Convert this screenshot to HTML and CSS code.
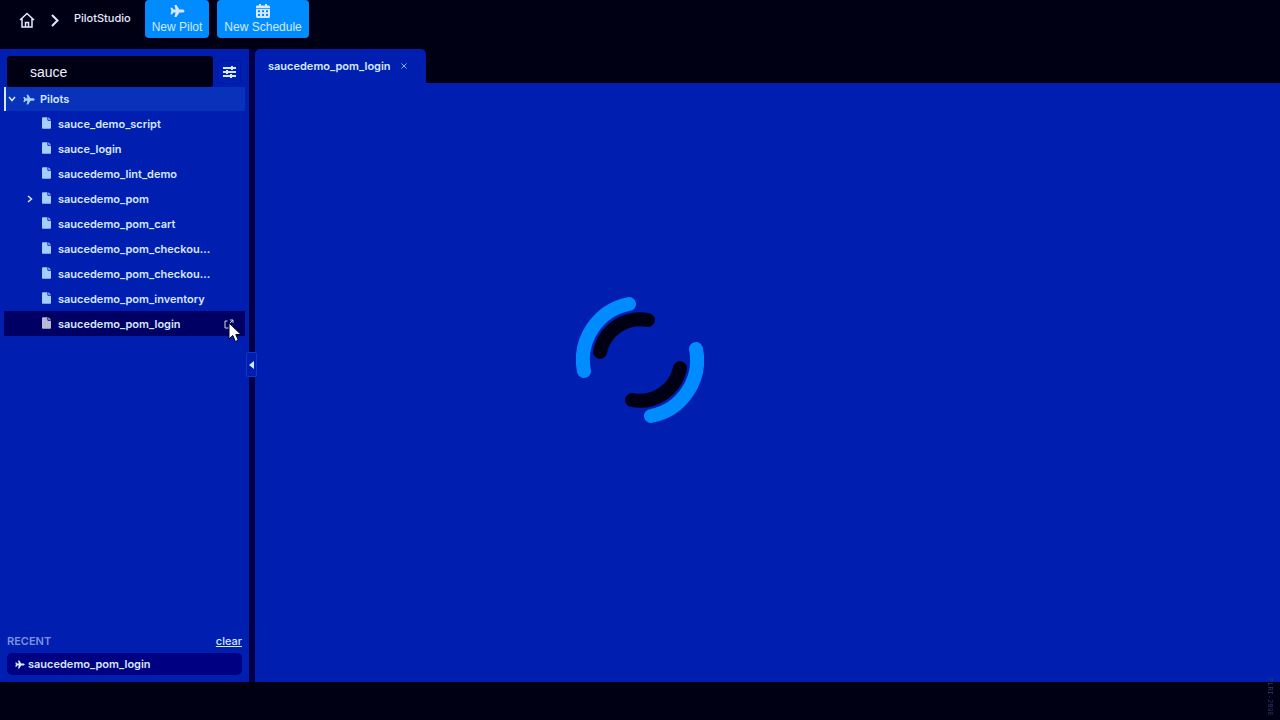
FILE: index.html
```html
<!DOCTYPE html>
<html lang="en">
<head>
  <meta charset="UTF-8" />
  <meta name="viewport" content="width=device-width, initial-scale=1.0" />
  <title>PilotStudio</title>
  <link rel="stylesheet" href="styles.css">
</head>
<body>
  <svg class="defs" aria-hidden="true">
    <symbol id="plane" viewBox="0 0 16 14">
      <path d="M15.5 7c0 1-1.300 1.700-2.500 1.700H10L6.900 13.500H4.700L6 8.700H3.700L2.400 10.400H.5L1.400 7 .5 3.600h1.900l1.300 1.700H6L4.700.5h2.200L10 5.300h3c1.200 0 2.500.7 2.500 1.700z" />
    </symbol>
    <symbol id="file" viewBox="0 0 10 13">
      <path d="M1.500 0H6v3.200c0 .5.300.8.800.8H10v7.700c0 .7-.5 1.300-1.300 1.300H1.300C.5 13 0 12.400 0 11.700V1.300C0 .5.600 0 1.500 0zM7 0l3 3H7z" />
    </symbol>
  </svg>

  <header class="topbar">
    <nav class="crumbs">
      <a class="home" href="#" aria-label="Home">
        <svg width="16" height="16" viewBox="0 0 16 16"><path d="M1 8l7-6.500L15 8M3 6.500V15h10V6.500M6.500 15v-4.500h3V15" /></svg>
      </a>
      <svg class="sep" width="8" height="13" viewBox="0 0 8 13"><path d="M1 1l5.500 5.500L1 12" /></svg>
      <a class="crumb" href="#">PilotStudio</a>
    </nav>
    <button class="action" type="button">
      <svg width="15" height="14"><use href="#plane" /></svg>
      New Pilot
    </button>
    <button class="action" type="button">
      <svg width="14" height="14" viewBox="0 0 14 14">
        <path fill-rule="evenodd" d="M3 0h2v1.500h4V0h2v1.500h1.500c.8 0 1.500.5 1.500 1.300V4H0V2.800c0-.8.700-1.300 1.500-1.300H3zM0 4.800h14v7.700c0 .8-.7 1.500-1.500 1.500h-11C.7 14 0 13.300 0 12.500zM2 6.200v2h2v-2zm4 0v2h2v-2zm4 0v2h2v-2zM2 10v2h2v-2zm4 0v2h2v-2zm4 0v2h2v-2z" />
      </svg>
      New Schedule
    </button>
  </header>

  <main class="workspace">
    <aside class="sidebar">
      <div class="search">
        <input class="search-input" type="text" value="sauce" aria-label="Search pilots" />
        <button class="filter" type="button" aria-label="Filters">
          <svg width="13" height="12" viewBox="0 0 13 12"><path d="M0 2h13M0 6h13M0 10h13M9 0v4M4 4v4M8 8v4" /></svg>
        </button>
      </div>

      <div class="root">
        <svg class="caret" width="8" height="6" viewBox="0 0 8 6"><path d="M1 1l3 3.500L7 1" /></svg>
        <svg class="root-icon" width="12" height="11"><use href="#plane" /></svg>
        <span>Pilots</span>
      </div>
      <ul class="tree">
        <li class="item"><svg class="file" width="9" height="12"><use href="#file" /></svg><span class="name">sauce_demo_script</span></li>
        <li class="item"><svg class="file" width="9" height="12"><use href="#file" /></svg><span class="name">sauce_login</span></li>
        <li class="item"><svg class="file" width="9" height="12"><use href="#file" /></svg><span class="name">saucedemo_lint_demo</span></li>
        <li class="item parent">
          <svg class="caret" width="6" height="8" viewBox="0 0 6 8"><path d="M1 1l3.500 3L1 7" /></svg>
          <svg class="file" width="9" height="12"><use href="#file" /></svg><span class="name">saucedemo_pom</span>
        </li>
        <li class="item"><svg class="file" width="9" height="12"><use href="#file" /></svg><span class="name">saucedemo_pom_cart</span></li>
        <li class="item"><svg class="file" width="9" height="12"><use href="#file" /></svg><span class="name">saucedemo_pom_checkou...</span></li>
        <li class="item"><svg class="file" width="9" height="12"><use href="#file" /></svg><span class="name">saucedemo_pom_checkou...</span></li>
        <li class="item"><svg class="file" width="9" height="12"><use href="#file" /></svg><span class="name">saucedemo_pom_inventory</span></li>
        <li class="item selected">
          <svg class="file" width="9" height="12"><use href="#file" /></svg><span class="name">saucedemo_pom_login</span>
          <button class="open" type="button" aria-label="Open in new tab">
            <svg width="10" height="10" viewBox="0 0 10 10"><path d="M3.500 2H1v7h7V6.500M6 1h3v3M9 1L5.500 4.500" /></svg>
          </button>
          <svg class="cursor" width="14" height="21" viewBox="0 0 14 21"><path d="M1 1v16l3.800-3.500L7.300 19.500l3-1.300L7.800 12.500H13z" /></svg>
        </li>
      </ul>

      <section class="recent">
        <div class="recent-head">
          <h2 class="recent-title">RECENT</h2>
          <a class="clear" href="#">clear</a>
        </div>
        <a class="recent-item" href="#">
          <svg width="10" height="9"><use href="#plane" /></svg>
          saucedemo_pom_login
        </a>
      </section>
    </aside>

    <div class="divider">
      <button class="collapse" type="button" aria-label="Collapse sidebar">
        <svg width="5" height="8" viewBox="0 0 5 8"><path d="M5 0v8L0 4z" /></svg>
      </button>
    </div>

    <section class="editor">
      <div class="tab">
        <span>saucedemo_pom_login</span>
        <button class="close" type="button" aria-label="Close tab">
          <svg width="6" height="6" viewBox="0 0 6 6"><path d="M.5.500l5 5M5.500.500l-5 5" /></svg>
        </button>
      </div>
      <div class="canvas"></div>
    </section>
  </main>

  <footer class="footer"></footer>
  <span class="version">PLRI-2890</span>

  <div class="loading" role="status" aria-label="Loading">
    <svg width="128" height="128" viewBox="-64 -64 128 128">
      <path class="ring outer" d="M-11-56A57 57 0 0 0-56 11M56-11A57 57 0 0 1 11 56" />
      <path class="ring inner" d="M8-40A41 41 0 0 0-40-8M40 8A41 41 0 0 1-8 40" />
    </svg>
  </div>
</body>
</html>
```
FILE: styles.css
```css
* {
  box-sizing: border-box;
}
body {
  margin: 0;
  height: 100vh;
  display: flex;
  flex-direction: column;
  background-color: #000014;
  color: #d5e8ff;
  font-family: Inter, sans-serif;
  font-size: 11px;
  font-weight: 600;
}
button {
  padding: 0;
  border: none;
  background: none;
  color: inherit;
  font: inherit;
  cursor: pointer;
}
a {
  color: inherit;
  text-decoration: none;
}
svg {
  flex: none;
  fill: currentColor;
}
.defs {
  position: absolute;
  width: 0;
  height: 0;
}

/* top bar */
.topbar {
  display: flex;
  align-items: flex-start;
  gap: 8px;
  height: 49px;
  padding-left: 19px;
}
.crumbs {
  display: flex;
  align-items: center;
  height: 40px;
  margin-right: 6px;
}
.home {
  display: flex;
}
.home svg,
.sep {
  fill: none;
  stroke: #e6e8ff;
  stroke-width: 2;
}
.home svg {
  stroke-width: 1.5;
}
.sep {
  margin: 0 15px 0 16px;
}
.crumb {
  padding-bottom: 4px;
  font-weight: 500;
  color: #e6e8ff;
}
.action {
  display: flex;
  flex-direction: column;
  align-items: center;
  gap: 2px;
  height: 38px;
  padding: 4px 7px 0;
  border-radius: 4px;
  background-color: #008cff;
  font-family: "Liberation Sans", sans-serif;
  font-size: 12px;
  font-weight: 400;
  line-height: 14px;
}

/* sidebar */
.workspace {
  flex: 1;
  display: flex;
  min-height: 0;
}
.sidebar {
  display: flex;
  flex-direction: column;
  width: 249px;
  padding: 7px 4px;
  background-color: #001eaf;
}
.search {
  display: flex;
  align-items: center;
  gap: 4px;
  padding: 0 4px 0 3px;
}
.search-input {
  flex: 1;
  min-width: 0;
  height: 31px;
  padding: 0 23px;
  border: none;
  border-radius: 3px;
  background-color: #000014;
  color: #f0f0ff;
  font-family: "Liberation Sans", sans-serif;
  font-size: 14px;
}
.filter {
  display: grid;
  place-items: center;
  width: 24px;
  height: 24px;
  border: 1px solid #0019a0;
  border-radius: 3px;
}
.filter path {
  stroke: currentColor;
  stroke-width: 2;
}
.root {
  display: flex;
  align-items: center;
  height: 24px;
  padding-left: 2px;
  border-left: 2px solid #d5e8ff;
  background-color: #0832b9;
}
.root-icon {
  margin: 0 5px 0 7px;
  color: #a5cdff;
}
.caret {
  fill: none;
  stroke: currentColor;
  stroke-width: 1.5;
}
.tree {
  margin: 0;
  padding: 0;
  list-style: none;
}
.item {
  position: relative;
  display: flex;
  align-items: center;
  height: 25px;
  padding-left: 38px;
}
.parent {
  padding-left: 23px;
}
.parent .caret {
  margin-right: 9px;
}
.file {
  margin: 0 7px 2px 0;
  color: #a5cdff;
}
.selected {
  background-color: #000064;
}
.selected .file {
  color: #b9b9d7;
}
.open {
  display: flex;
  margin-left: auto;
  margin-right: 11px;
}
.open path {
  fill: none;
  stroke: #d2d2eb;
}
.cursor {
  position: absolute;
  top: 11px;
  right: 3px;
  fill: #fff;
  stroke: #000032;
}
.recent {
  margin-top: auto;
  padding: 0 3px;
}
.recent-head {
  display: flex;
  align-items: center;
  justify-content: space-between;
  height: 24px;
}
.recent-title {
  margin: 0;
  font-size: 11px;
  font-weight: 600;
  color: #7d91dc;
}
.clear {
  font-weight: 500;
  text-decoration: underline;
}
.recent-item {
  display: flex;
  align-items: center;
  gap: 3px;
  height: 22px;
  padding-left: 8px;
  border-radius: 5px;
  background-color: #000082;
}

/* divider */
.divider {
  position: relative;
  width: 6px;
  background-color: #000046;
}
.collapse {
  position: absolute;
  top: 303px;
  left: -3px;
  display: grid;
  place-items: center;
  width: 11px;
  height: 25px;
  border: 1px solid #1437be;
  border-radius: 2px;
  background-color: #001eaf;
}

/* editor */
.editor {
  flex: 1;
  display: flex;
  flex-direction: column;
  align-items: flex-start;
}
.tab {
  display: flex;
  align-items: center;
  gap: 10px;
  height: 34px;
  padding: 0 19px 0 13px;
  border-radius: 5px 5px 0 0;
  background-color: #001eaf;
}
.close {
  display: flex;
}
.close path {
  stroke: #96aff0;
}
.canvas {
  flex: 1;
  align-self: stretch;
  background-color: #001eaf;
}
.footer {
  height: 38px;
}
.version {
  position: fixed;
  right: 6px;
  bottom: 4px;
  writing-mode: vertical-rl;
  font-family: "Liberation Mono", monospace;
  font-size: 7px;
  font-weight: 400;
  line-height: 8px;
  color: #32376e;
}

/* loading spinner */
.loading {
  position: fixed;
  inset: 0;
  display: grid;
  place-items: center;
  pointer-events: none;
}
.ring {
  fill: none;
  stroke-width: 14;
  stroke-linecap: round;
}
.outer {
  stroke: #008cff;
}
.inner {
  stroke: #000014;
}
```
